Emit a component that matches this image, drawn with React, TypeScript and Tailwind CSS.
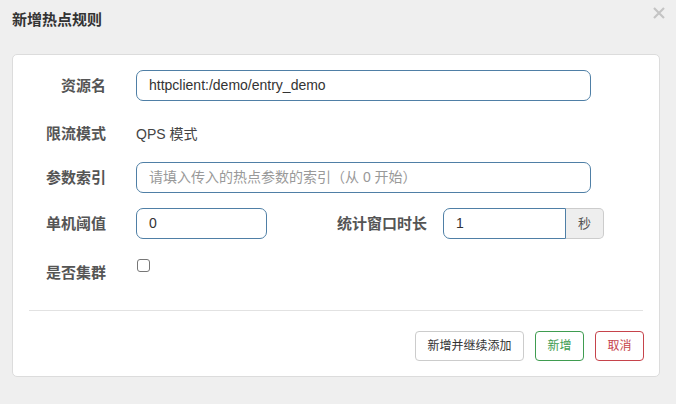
import React from 'react';

const font = "font-['Liberation_Sans','Noto_Sans_CJK_SC',sans-serif]";

const Label: React.FC<{ children: React.ReactNode; className?: string }> = ({ children, className }) => (
  <label className={`w-[93px] shrink-0 text-right text-[15px] font-bold text-[#555] leading-5 ${className || ''}`}>
    {children}
  </label>
);

export default function App() {
  return (
    <div className={`w-[676px] h-[404px] bg-[#efefef] ${font}`}>
      <div className="flex items-start justify-between h-[54px] pl-3 pr-[11px]">
        <h4 className="pt-[10px] text-[15px] font-bold text-[#333] leading-5">新增热点规则</h4>
        <button className="mt-[7px] text-[#c4c4c4]">
          <svg width="12" height="12" viewBox="0 0 12 12">
            <path d="M1 1 L11 11 M11 1 L1 11" stroke="currentColor" strokeWidth="2.2" />
          </svg>
        </button>
      </div>

      <div className="ml-3 mr-4 h-[323px] bg-white border border-[#dcdcdc] rounded-[5px] pt-[15px]">
        <div className="flex flex-col gap-[15px]">
          <div className="flex items-center h-[31px]">
            <Label>资源名</Label>
            <div className="ml-[30px] w-[455px] h-[31px] border border-[#4f7fa6] rounded-[7px] flex items-center px-3 text-[14px] text-[#333]">
              httpclient:/demo/entry_demo
            </div>
          </div>

          <div className="flex items-center h-[31px] pt-[5px]">
            <Label>限流模式</Label>
            <span className="ml-[30px] text-[14px] text-[#444]">QPS 模式</span>
          </div>

          <div className="flex items-center h-[31px]">
            <Label>参数索引</Label>
            <div className="ml-[30px] w-[455px] h-[31px] border border-[#4f7fa6] rounded-[7px] flex items-center px-3 text-[14px] text-[#999]">
              请填入传入的热点参数的索引（从 0 开始）
            </div>
          </div>

          <div className="flex items-center h-[31px]">
            <Label>单机阈值</Label>
            <div className="ml-[30px] w-[131px] h-[31px] border border-[#4f7fa6] rounded-[7px] flex items-center px-3 text-[14px] text-[#333]">
              0
            </div>
            <label className="ml-[70px] text-[15px] font-bold text-[#555] leading-5">统计窗口时长</label>
            <div className="ml-[16px] flex h-[31px]">
              <div className="w-[123px] border border-[#4f7fa6] rounded-l-[7px] flex items-center px-3 text-[14px] text-[#333]">
                1
              </div>
              <div className="w-[38px] bg-[#eeeeee] border border-l-0 border-[#cccccc] rounded-r-[5px] flex items-center justify-center text-[13px] text-[#555]">
                秒
              </div>
            </div>
          </div>

          <div className="flex items-start h-[57px]">
            <Label className="mt-[9px]">是否集群</Label>
            <span className="ml-[31px] mt-[5px] w-[13px] h-[13px] border border-[#777] rounded-[3px] bg-white" />
          </div>
        </div>

        <div className="mx-4 mt-[-1px] border-t border-[#e2e2e2]" />

        <div className="flex justify-end gap-[11px] pr-[15px] pt-[20px]">
          <button className="h-[30px] w-[109px] border border-[#cccccc] rounded-[4px] bg-white text-[12px] text-[#333]">
            新增并继续添加
          </button>
          <button className="h-[30px] w-[49px] border border-[#3f9c50] rounded-[4px] bg-white text-[12px] text-[#3f9c50]">
            新增
          </button>
          <button className="h-[30px] w-[49px] border border-[#c6434b] rounded-[4px] bg-white text-[12px] text-[#c6434b]">
            取消
          </button>
        </div>
      </div>
    </div>
  );
}
